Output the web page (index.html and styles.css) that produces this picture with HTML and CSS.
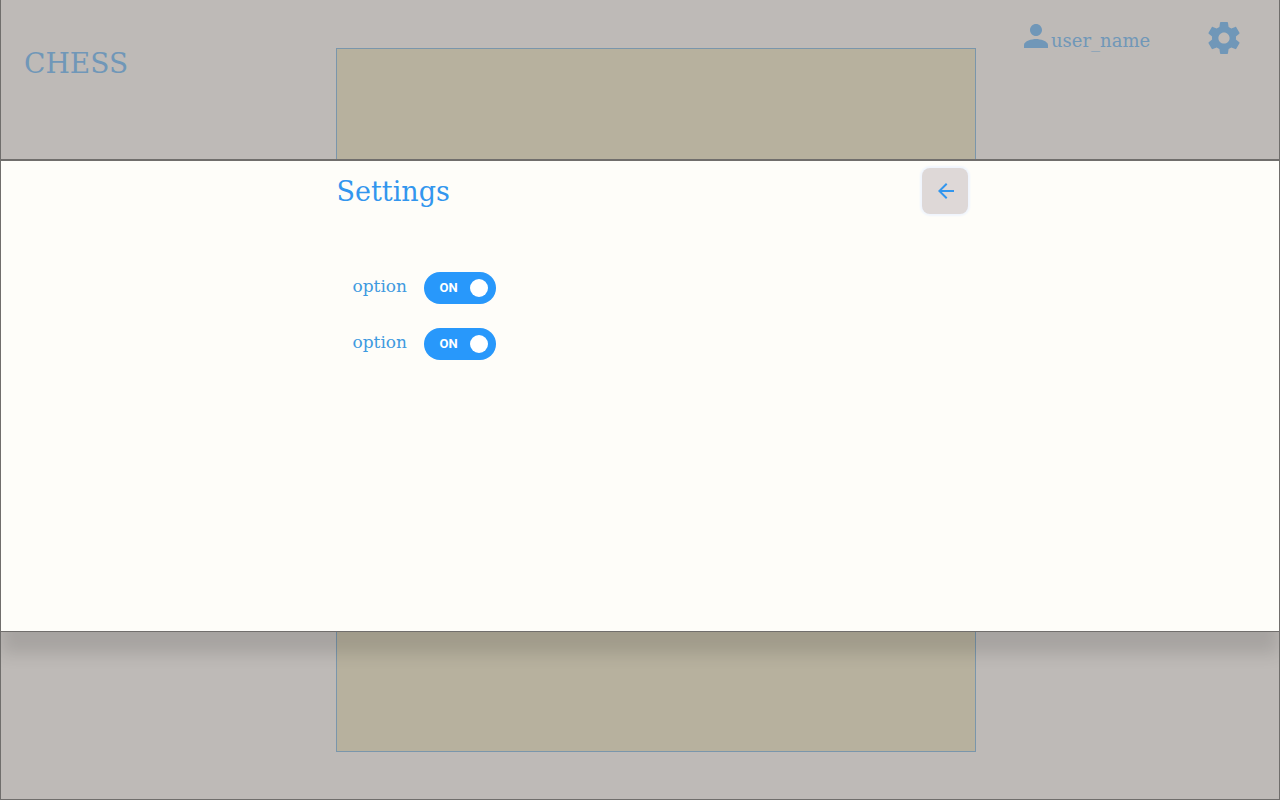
FILE: index.html
```html
<!DOCTYPE html>
<html lang="en">
<head>
<meta charset="utf-8">
<meta name="viewport" content="width=device-width, initial-scale=1">
<title>Chess</title>
<link rel="stylesheet" href="styles.css">
</head>
<body>
<div class="page columns">
  <h1 class="brand">CHESS</h1>
  <main class="board"></main>
  <nav class="account">
    <a class="user" href="#">
      <svg class="user-icon" viewBox="4 4 16 16" aria-hidden="true"><path fill="currentColor" d="M12 12c2.21 0 4-1.79 4-4s-1.79-4-4-4-4 1.79-4 4 1.79 4 4 4zm0 2c-2.67 0-8 1.34-8 4v2h16v-2c0-2.66-5.33-4-8-4z"/></svg>
      <span>user_name</span>
    </a>
    <button class="gear" type="button" aria-label="Settings">
      <svg class="gear-icon" viewBox="2 2 20 20" aria-hidden="true"><path fill="currentColor" d="M19.43 12.98c.04-.32.07-.64.07-.98s-.03-.66-.07-.98l2.11-1.65c.19-.15.24-.42.12-.64l-2-3.46c-.12-.22-.39-.3-.61-.22l-2.49 1c-.52-.4-1.08-.73-1.69-.98l-.38-2.65C14.46 2.18 14.25 2 14 2h-4c-.25 0-.46.18-.49.42l-.38 2.65c-.61.25-1.17.59-1.69.98l-2.49-1c-.23-.09-.49 0-.61.22l-2 3.46c-.13.22-.07.49.12.64l2.11 1.65c-.04.32-.07.65-.07.98s.03.66.07.98l-2.11 1.65c-.19.15-.24.42-.12.64l2 3.46c.12.22.39.3.61.22l2.49-1c.52.4 1.08.73 1.69.98l.38 2.65c.03.24.24.42.49.42h4c.25 0 .46-.18.49-.42l.38-2.65c.61-.25 1.17-.59 1.69-.98l2.49 1c.23.09.49 0 .61-.22l2-3.46c.12-.22.07-.49-.12-.64l-2.11-1.65zM12 15.5c-1.93 0-3.5-1.57-3.5-3.5s1.57-3.5 3.5-3.5 3.5 1.57 3.5 3.5-1.57 3.5-3.5 3.5z"/></svg>
    </button>
  </nav>
</div>

<div class="overlay">
  <section class="dialog columns" role="dialog" aria-labelledby="settings-title">
    <div class="dialog-body">
      <header class="dialog-head">
        <h2 class="dialog-title" id="settings-title">Settings</h2>
        <button class="back" type="button" aria-label="Back">
          <svg class="back-icon" viewBox="4 4 16 16" aria-hidden="true"><path fill="currentColor" d="M20 11H7.83l5.59-5.59L12 4l-8 8 8 8 1.41-1.41L7.83 13H20v-2z"/></svg>
        </button>
      </header>
      <div class="options">
        <label class="option">
          <span class="option-name">option</span>
          <span class="switch"><input class="switch-input" type="checkbox" checked><span class="switch-text">ON</span><span class="switch-knob"></span></span>
        </label>
        <label class="option">
          <span class="option-name">option</span>
          <span class="switch"><input class="switch-input" type="checkbox" checked><span class="switch-text">ON</span><span class="switch-knob"></span></span>
        </label>
      </div>
    </div>
  </section>
</div>
</body>
</html>
```
FILE: styles.css
```css
* {
  box-sizing: border-box;
}

body {
  margin: 0;
  background: #bebab7;
  color: #7097b8;
  font-family: "DejaVu Serif", serif;
}

.columns {
  display: grid;
  grid-template-columns: minmax(0, 21fr) minmax(0, 40fr) minmax(0, 19fr);
}

.page {
  min-height: 100vh;
}

.brand {
  margin: 0;
  padding: 46px 24px 0;
  font-size: 28px;
  line-height: 36px;
  font-weight: 400;
}

.board {
  margin: 48px 0;
  border: 1px solid #7a96ab;
  background: #b7b19e;
}

.account {
  display: flex;
  align-items: flex-start;
  justify-content: space-between;
  padding: 22px 40px 0 48px;
}

.user {
  display: flex;
  align-items: flex-start;
  gap: 3px;
  padding-top: 2px;
  color: inherit;
  font-size: 18px;
  line-height: 34px;
  text-decoration: none;
}

.user-icon {
  flex: none;
  width: 24px;
  height: 24px;
}

.gear {
  padding: 0;
  border: 0;
  background: none;
  color: inherit;
}

.gear-icon {
  display: block;
  width: 32px;
  height: 32px;
}

.overlay {
  position: absolute;
  inset: 0;
  padding-top: 159px;
  border: 1px solid #706e6c;
  border-top: 0;
  overflow: hidden;
}

.dialog {
  min-height: 473px;
  border-top: 2px solid #706e6c;
  border-bottom: 1px solid #706e6c;
  background: #fefdf9;
  color: #3296ee;
  box-shadow: 0 22px 16px 0 rgba(0, 0, 0, 0.12);
}

.dialog-body {
  grid-column: 2;
}

.dialog-head {
  display: flex;
  align-items: flex-start;
  justify-content: space-between;
  padding: 7px 7px 0 0;
}

.dialog-title {
  margin: 0;
  font-size: 27px;
  line-height: 48px;
  font-weight: 400;
}

.back {
  display: grid;
  place-items: center;
  width: 46px;
  height: 46px;
  padding: 0 0 0 2px;
  border: 0;
  border-radius: 8px;
  background: #ded8d7;
  box-shadow: 0 0 2px 2px #f0f5fd;
  color: inherit;
}

.back-icon {
  width: 16px;
  height: 16px;
}

.options {
  display: flex;
  flex-direction: column;
  align-items: flex-start;
  gap: 24px;
  padding: 56px 16px 24px;
}

.option {
  display: flex;
  gap: 16px;
  color: #3e9ae0;
  font-size: 17px;
  line-height: 28px;
}

.option-name {
  min-width: 56px;
}

.switch {
  position: relative;
  display: flex;
  align-items: center;
  justify-content: space-between;
  width: 72px;
  height: 32px;
  padding: 0 8px 0 15px;
}

.switch-input {
  position: absolute;
  inset: 0;
  margin: 0;
  border-radius: 16px;
  background: #2898fb;
  appearance: none;
}

.switch-text {
  position: relative;
  color: #fff;
  font: 700 13px/32px Roboto, sans-serif;
}

.switch-knob {
  position: relative;
  width: 18px;
  height: 18px;
  border-radius: 50%;
  background: #fff;
}
```
